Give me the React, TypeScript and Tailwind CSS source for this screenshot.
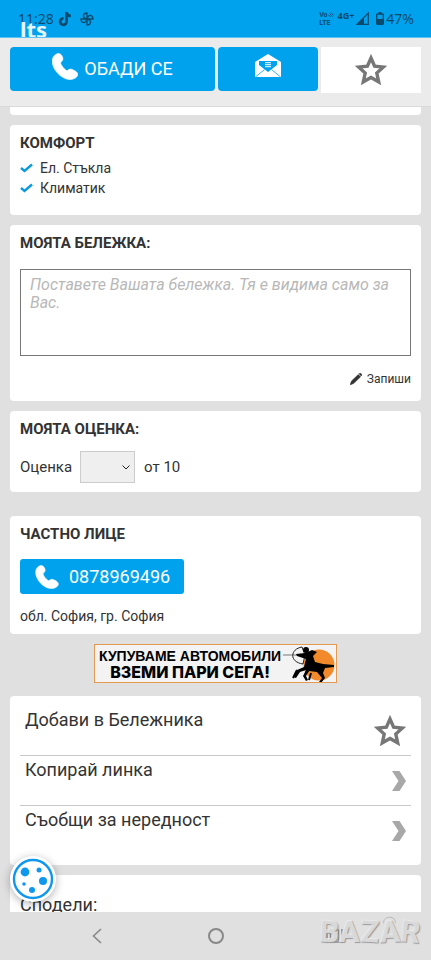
import { useState, type ReactNode } from 'react';

function Card({ title, children }: { title?: string; children?: ReactNode }) {
  return (
    <section className="rounded bg-white px-[10px] pt-[10px]">
      {title && <h2 className="text-[15px] leading-[17px] font-bold text-[#333]">{title}</h2>}
      {children}
    </section>
  );
}

function PhoneIcon({ className }: { className: string }) {
  return (
    <svg viewBox="0 0 26 27" className={className} fill="currentColor" aria-hidden="true">
      <path
        d="M5 .8C7.400-.2 9.800 1.600 10.600 4.200c.8 2.500-.2 4-1.900 5.200-.8 1.700 4.300 8 6.500 8.400 1.700-1.700 3.300-2.200 5.600-1.100 2.600 1.200 5 2.700 5 4.600 0 3.100-4.600 5.700-9 5.200C8.800 25.600.4 16.500.2 8.600.1 4.800 1.900 2.100 5 .8z"
        stroke="currentColor"
        strokeWidth=".6"
      />
    </svg>
  );
}

function StarIcon() {
  return (
    <svg viewBox="0 0 32 32" className="h-8 w-8" aria-hidden="true">
      <path
        d="M16 4l3.600 8.100 8.800.9-6.600 6 1.900 8.800L16 23.400l-7.700 4.400 1.900-8.800-6.600-6 8.800-.9z"
        fill="none"
        stroke="#777"
        strokeWidth="3.400"
      />
    </svg>
  );
}

function CheckIcon() {
  return (
    <svg viewBox="0 0 13 10" className="h-[10px] w-[13px]" aria-hidden="true">
      <path d="M1 5l3.500 3L12 1.500" fill="none" stroke="#0b9bdc" strokeWidth="2.400" />
    </svg>
  );
}

function ChevronIcon() {
  return (
    <svg viewBox="0 0 14 20" className="h-5 w-[14px]" fill="#a8a8a8" aria-hidden="true">
      <path d="M0 0h7.500L14 10l-6.500 10H0l6.500-10z" />
    </svg>
  );
}

function StatusBar() {
  return (
    <div className="relative flex h-[38px] shrink-0 items-center justify-between overflow-hidden border-b border-[#5cc3f3] bg-[#00a2ed] pr-[17px] pl-[18px] font-['Noto_Sans',sans-serif] text-[#0b4a6c]">
      <div className="flex items-center">
        <span className="text-[14px] leading-5">11:28</span>
        <svg viewBox="0 0 14 16" className="ml-1 h-4 w-[14px]" fill="none" aria-hidden="true">
          <path
            d="M8.500 1v9.600a3.200 3.200 0 1 1-3-3.200M8.500 1.500c.4 2 1.800 3.300 4.300 3.500"
            stroke="currentColor"
            strokeWidth="2.800"
          />
        </svg>
        <svg viewBox="0 0 14 14" className="ml-2 h-[14px] w-[14px]" fill="none" stroke="currentColor" strokeWidth="1.300" aria-hidden="true">
          <path d="M7 7V1c-4 0-4.500 4-2 5zM7 7h6c0-4-4-4.500-5-2zM7 7v6c4 0 4.500-4 2-5zM7 7H1c0 4 4 4.500 5 2z" />
        </svg>
      </div>
      <div className="flex items-center">
        <div className="font-['Roboto',sans-serif] text-[7px] leading-[8px] font-bold">
          <div className="flex items-center">
            Vo
            <svg viewBox="0 0 6 6" className="h-[6px] w-[6px]" fill="none" stroke="currentColor" aria-hidden="true">
              <path d="M.5 3l2 2M1.500 1.500l3 3M3 .5l2.500 3" />
            </svg>
          </div>
          <div>LTE</div>
        </div>
        <span className="mb-[6px] ml-1 text-[9px] leading-3 font-bold">4G+</span>
        <svg viewBox="0 0 13 13" className="ml-[2px] h-[13px] w-[13px]" aria-hidden="true">
          <path d="M12.300 1v11.300H1z" fill="none" stroke="currentColor" strokeWidth="1.200" />
          <path d="M8 5v7.500H.5z" fill="currentColor" />
        </svg>
        <svg viewBox="0 0 8 13" className="ml-[7px] h-[13px] w-2" aria-hidden="true">
          <path d="M2.500 0h3v2h-3z" fill="currentColor" />
          <rect x=".7" y="2" width="6.600" height="10.300" rx=".8" fill="none" stroke="currentColor" strokeWidth="1.400" />
          <path d="M1 7h6v5H1z" fill="currentColor" />
        </svg>
        <span className="ml-[2px] text-[14px] leading-5">47%</span>
      </div>
      <span className="absolute top-[14px] left-5 font-['Noto_Sans',sans-serif] text-[22px] leading-[30px] font-bold text-white/90">
        lts
      </span>
    </div>
  );
}

function Toolbar() {
  return (
    <header className="flex shrink-0 items-start gap-[3px] border-b border-[#d9d9d9] bg-[#ebebeb] px-[10px] pt-[9px] pb-[13px]">
      <a href="tel:0878969496" className="flex h-11 flex-1 items-center justify-center gap-[6px] rounded bg-[#00a2ed] text-white">
        <PhoneIcon className="mb-[6px] h-[27px] w-[26px]" />
        <span className="text-[18px] leading-6">ОБАДИ СЕ</span>
      </a>
      <button type="button" aria-label="Изпрати съобщение" className="flex h-11 w-[100px] justify-center rounded bg-[#00a2ed] pt-[7px]">
        <svg viewBox="0 0 26 23" className="h-[23px] w-[26px]" aria-hidden="true">
          <path d="M0 8L13 0l13 8v14a1 1 0 0 1-1 1H1a1 1 0 0 1-1-1z" fill="#fff" />
          <path d="M4 7h18v4l-9 7-9-7z" fill="#00a2ed" />
          <path d="M10 8.700h6M10 10.700h6M10 12.700h6" stroke="#fff" />
          <path d="M9.500 15.500L1 22.500M16.500 15.500l8.500 7" fill="none" stroke="#00a2ed" strokeWidth=".8" />
        </svg>
      </button>
      <button type="button" aria-label="Добави в Бележника" className="flex h-[46px] w-[100px] items-center justify-center bg-white">
        <StarIcon />
      </button>
    </header>
  );
}

function Banner() {
  return (
    <a
      href="#"
      className="mt-[10px] flex h-[39px] w-[243px] justify-between self-center border border-[#e3994f] bg-[#f3f3f3] pl-1 text-black"
    >
      <span className="pt-[3px] text-center whitespace-nowrap">
        <span className="block font-['Liberation_Sans',Arial,sans-serif] text-[14px] leading-4 font-bold">КУПУВАМЕ АВТОМОБИЛИ</span>
        <span className="block font-['Inter',sans-serif] text-[16px] leading-4 font-extrabold">ВЗЕМИ ПАРИ СЕГА!</span>
      </span>
      <svg viewBox="0 0 54 37" className="h-[37px] w-[54px] shrink-0" aria-hidden="true">
        <circle cx="37" cy="20" r="15.500" fill="#f28a2c" />
        <path d="M1 10h22" stroke="#777" />
        <path d="M20 2c-12 2-13 15 1 17M20 2l3 8-2 9" fill="none" stroke="#222" />
        <circle cx="24" cy="5" r="3" />
        <path d="M14 9l9-1 7-3 5 2-4 4 2 6 8 2 11 1v2l-9 1-2 5 2 5-4 5-2-1 3-4-5-6-8-1-3 5 2 4-2 1-3-5 3-6-6 2-4 6-3-1 4-7 7-3 2-8-9-3z" />
        <path d="M11 33l4-8M27 35l2-7M29 20l-4 7" stroke="#000" strokeWidth="2" />
      </svg>
    </a>
  );
}

function Watermark() {
  return (
    <div
      aria-hidden="true"
      className="pointer-events-none absolute top-0 right-[11px] flex items-end font-['Roboto',sans-serif] text-[31px] leading-10 font-black text-[#eee]/75 [text-shadow:1px_1px_1px_#999]"
    >
      <span className="rotate-3">B</span>
      <span>A</span>
      <span className="rotate-3">Z</span>
      <span className="relative -rotate-3">
        A
        <svg viewBox="0 0 16 8" className="absolute top-1 left-[3px] h-2 w-4" fill="none" stroke="#bbb">
          <path d="M2 7c0-7 12-8 12 0" />
        </svg>
      </span>
      <span className="rotate-6">R</span>
    </div>
  );
}

const extras = ['Ел. Стъкла', 'Климатик'];

const actions = [
  { label: 'Добави в Бележника', icon: <StarIcon /> },
  { label: 'Копирай линка', icon: <ChevronIcon /> },
  { label: 'Съобщи за нередност', icon: <ChevronIcon /> },
];

export default function App() {
  const [note, setNote] = useState('');
  const [rating, setRating] = useState('');

  return (
    <div className="relative flex h-screen flex-col overflow-hidden bg-[#e0e0e0] font-['Roboto',sans-serif] text-[#333]">
      <StatusBar />
      <Toolbar />

      <main className="flex min-h-0 flex-1 flex-col overflow-hidden px-[10px]">
        <div className="h-2 shrink-0 rounded-b bg-white" />

        <div className="mt-[10px] flex flex-col gap-[10px]">
          <Card title="КОМФОРТ">
            <ul className="mt-[6px] pb-[17px]">
              {extras.map((item) => (
                <li key={item} className="flex items-center gap-[7px] text-[14px] leading-5">
                  <CheckIcon />
                  {item}
                </li>
              ))}
            </ul>
          </Card>

          <Card title="МОЯТА БЕЛЕЖКА:">
            <textarea
              aria-label="Моята бележка"
              value={note}
              onChange={(e) => setNote(e.target.value)}
              placeholder="Поставете Вашата бележка. Тя е видима само за Вас."
              className="mt-[17px] block h-[87px] w-full resize-none border border-[#777] px-[9px] py-[6px] text-[16px] leading-[18px] italic placeholder:text-[#b8b8b8]"
            />
            <div className="flex justify-end pt-[14px] pb-[13px]">
              <button type="button" className="flex items-center gap-[5px] text-[12px] leading-[18px]">
                <svg viewBox="0 0 12 12" className="h-3 w-3" fill="currentColor" stroke="currentColor" strokeWidth=".5" aria-hidden="true">
                  <path d="M8.300 1.500l2.300 2.300-6.700 6.500L0 12l1.500-4zM9 .8l.6-.6q.5-.4 1 0l1.200 1.200q.4.500 0 1l-.6.6z" />
                </svg>
                Запиши
              </button>
            </div>
          </Card>

          <Card title="МОЯТА ОЦЕНКА:">
            <div className="flex items-center pt-[13px] pb-[9px] text-[15px] leading-5">
              <label htmlFor="rating">Оценка</label>
              <span className="relative mr-[9px] ml-2">
                <select
                  id="rating"
                  value={rating}
                  onChange={(e) => setRating(e.target.value)}
                  className="block h-8 w-[55px] appearance-none border border-[#ccc] bg-[#efefef] pl-2"
                >
                  <option value=""></option>
                  {[1, 2, 3, 4, 5, 6, 7, 8, 9, 10].map((n) => (
                    <option key={n} value={n}>
                      {n}
                    </option>
                  ))}
                </select>
                <svg viewBox="0 0 8 5" className="pointer-events-none absolute top-[14px] right-[5px] h-[5px] w-2" aria-hidden="true">
                  <path d="M.5.5L4 4 7.500.5" fill="none" stroke="#222" />
                </svg>
              </span>
              <span>от 10</span>
            </div>
          </Card>
        </div>

        <div className="mt-6">
          <Card title="ЧАСТНО ЛИЦЕ">
            <a href="tel:0878969496" className="mt-4 flex h-[35px] w-[164px] items-center gap-[10px] rounded-[3px] bg-[#00a2ed] pl-[15px] text-white">
              <PhoneIcon className="h-6 w-6" />
              <span className="text-[18px] leading-6">0878969496</span>
            </a>
            <p className="mt-[13px] pb-[9px] text-[14px] leading-[18px]">обл. София, гр. София</p>
          </Card>
        </div>

        <Banner />

        <div className="mt-[13px] flex flex-col gap-[10px]">
          <Card>
            <ul className="divide-y divide-[#c9c9c9] pb-[10px]">
              {actions.map((a) => (
                <li key={a.label}>
                  <button type="button" className="flex h-[49px] w-full items-center justify-between px-[5px] text-left">
                    <span className="self-start text-[18px] leading-7">{a.label}</span>
                    {a.icon}
                  </button>
                </li>
              ))}
            </ul>
          </Card>

          <Card>
            <p className="pt-[6px] text-[18px] leading-7">Сподели:</p>
          </Card>
        </div>
      </main>

      <nav className="relative flex h-12 shrink-0 items-center justify-center gap-[95px] bg-[#e0e0e0] text-[#888]">
        <button type="button" aria-label="Назад" className="flex h-6 w-6 items-center justify-center">
          <svg viewBox="0 0 10 16" className="h-4 w-[10px]" aria-hidden="true">
            <path d="M9 1L1.500 8 9 15" fill="none" stroke="currentColor" strokeWidth="1.600" />
          </svg>
        </button>
        <button type="button" aria-label="Начало" className="flex h-6 w-6 items-center justify-center">
          <span className="h-4 w-4 rounded-full border-2 border-[#888]" />
        </button>
        <button type="button" aria-label="Последни" className="flex h-6 w-6 items-center justify-center">
          <svg viewBox="0 0 17 14" className="h-[14px] w-[17px]" fill="none" stroke="currentColor" strokeWidth="1.500" aria-hidden="true">
            <path d="M1 0v14M4.500 1h8v12h-8zM16 0v14" />
          </svg>
        </button>
        <Watermark />
      </nav>

      <button
        type="button"
        aria-label="Бисквитки"
        className="absolute bottom-[58px] left-[10px] h-[46px] w-[46px] rounded-full bg-white shadow-[0_2px_8px_rgba(0,0,0,0.3)]"
      >
        <svg viewBox="0 0 46 46" className="h-full w-full" fill="#0f97ee" aria-hidden="true">
          <circle cx="23" cy="23" r="19" fill="none" stroke="#0f97ee" strokeWidth="2.400" />
          <circle cx="15" cy="16" r="4.400" />
          <circle cx="29" cy="14" r="2.500" />
          <circle cx="33" cy="25" r="4" />
          <circle cx="14" cy="28" r="1.800" />
          <circle cx="22" cy="34" r="3" />
        </svg>
      </button>
    </div>
  );
}
